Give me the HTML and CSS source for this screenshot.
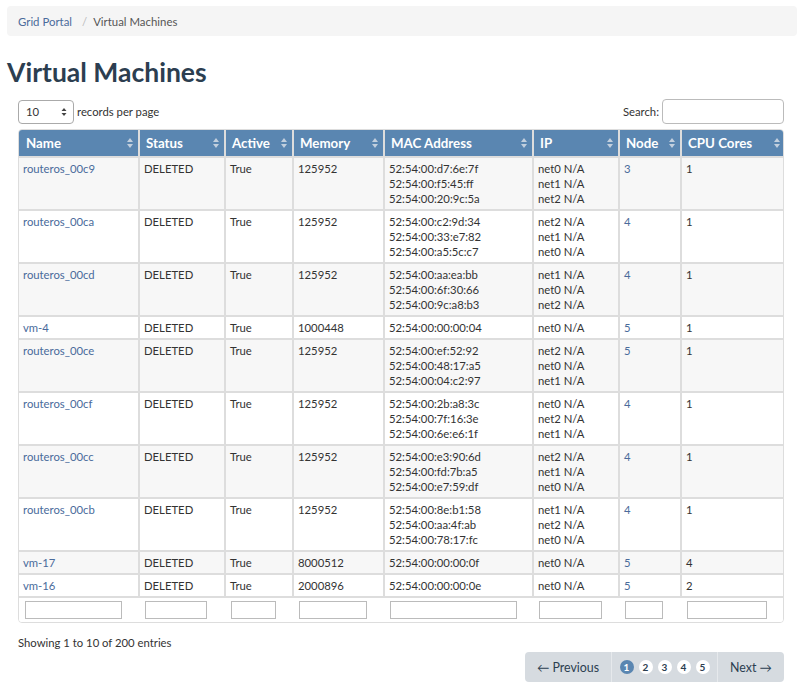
FILE: index.html
```html
<!DOCTYPE html>
<html>
<head>
<meta charset="utf-8">
<link rel="stylesheet" href="styles.css">
</head>
<body>
<div class="page">
  <ol class="crumbs">
    <li><a href="#">Grid Portal</a></li>
    <li class="sep">/</li>
    <li class="cur">Virtual Machines</li>
  </ol>
  <h1 class="title">Virtual Machines</h1>
  <div class="dt">
    <div class="tools">
      <label class="len"><span class="sel">10<svg width="6" height="10" viewBox="0 0 6 10"><path d="M3 1 L5.5 4 H0.5Z M3 9 L5.5 6 H0.5Z" fill="#444"/></svg></span> records per page</label>
      <label class="search">Search: <input type="text"></label>
    </div>
    <div class="tablewrap">
    <table class="grid">
      <colgroup>
        <col style="width:120px"><col style="width:86px"><col style="width:68px"><col style="width:91px"><col style="width:149px"><col style="width:86px"><col style="width:62px"><col style="width:104px">
      </colgroup>
      <thead>
        <tr>
          <th>Name<i class="sort"></i></th>
          <th>Status<i class="sort"></i></th>
          <th>Active<i class="sort"></i></th>
          <th>Memory<i class="sort"></i></th>
          <th>MAC Address<i class="sort"></i></th>
          <th>IP<i class="sort"></i></th>
          <th>Node<i class="sort"></i></th>
          <th>CPU Cores<i class="sort"></i></th>
        </tr>
      </thead>
      <tbody>
        <tr><td><a href="#">routeros_00c9</a></td><td>DELETED</td><td>True</td><td>125952</td><td>52:54:00:d7:6e:7f<br>52:54:00:f5:45:ff<br>52:54:00:20:9c:5a</td><td>net0 N/A<br>net1 N/A<br>net2 N/A</td><td><a href="#">3</a></td><td>1</td></tr>
        <tr><td><a href="#">routeros_00ca</a></td><td>DELETED</td><td>True</td><td>125952</td><td>52:54:00:c2:9d:34<br>52:54:00:33:e7:82<br>52:54:00:a5:5c:c7</td><td>net2 N/A<br>net1 N/A<br>net0 N/A</td><td><a href="#">4</a></td><td>1</td></tr>
        <tr><td><a href="#">routeros_00cd</a></td><td>DELETED</td><td>True</td><td>125952</td><td>52:54:00:aa:ea:bb<br>52:54:00:6f:30:66<br>52:54:00:9c:a8:b3</td><td>net1 N/A<br>net0 N/A<br>net2 N/A</td><td><a href="#">4</a></td><td>1</td></tr>
        <tr><td><a href="#">vm-4</a></td><td>DELETED</td><td>True</td><td>1000448</td><td>52:54:00:00:00:04</td><td>net0 N/A</td><td><a href="#">5</a></td><td>1</td></tr>
        <tr><td><a href="#">routeros_00ce</a></td><td>DELETED</td><td>True</td><td>125952</td><td>52:54:00:ef:52:92<br>52:54:00:48:17:a5<br>52:54:00:04:c2:97</td><td>net2 N/A<br>net0 N/A<br>net1 N/A</td><td><a href="#">5</a></td><td>1</td></tr>
        <tr><td><a href="#">routeros_00cf</a></td><td>DELETED</td><td>True</td><td>125952</td><td>52:54:00:2b:a8:3c<br>52:54:00:7f:16:3e<br>52:54:00:6e:e6:1f</td><td>net0 N/A<br>net2 N/A<br>net1 N/A</td><td><a href="#">4</a></td><td>1</td></tr>
        <tr><td><a href="#">routeros_00cc</a></td><td>DELETED</td><td>True</td><td>125952</td><td>52:54:00:e3:90:6d<br>52:54:00:fd:7b:a5<br>52:54:00:e7:59:df</td><td>net2 N/A<br>net1 N/A<br>net0 N/A</td><td><a href="#">4</a></td><td>1</td></tr>
        <tr><td><a href="#">routeros_00cb</a></td><td>DELETED</td><td>True</td><td>125952</td><td>52:54:00:8e:b1:58<br>52:54:00:aa:4f:ab<br>52:54:00:78:17:fc</td><td>net1 N/A<br>net2 N/A<br>net0 N/A</td><td><a href="#">4</a></td><td>1</td></tr>
        <tr><td><a href="#">vm-17</a></td><td>DELETED</td><td>True</td><td>8000512</td><td>52:54:00:00:00:0f</td><td>net0 N/A</td><td><a href="#">5</a></td><td>4</td></tr>
        <tr><td><a href="#">vm-16</a></td><td>DELETED</td><td>True</td><td>2000896</td><td>52:54:00:00:00:0e</td><td>net0 N/A</td><td><a href="#">5</a></td><td>2</td></tr>
      </tbody>
      <tfoot>
        <tr>
          <td><input class="f f1" type="text"></td>
          <td><input class="f f2" type="text"></td>
          <td><input class="f f3" type="text"></td>
          <td><input class="f f4" type="text"></td>
          <td><input class="f f5" type="text"></td>
          <td><input class="f f6" type="text"></td>
          <td><input class="f f7" type="text"></td>
          <td><input class="f f8" type="text"></td>
        </tr>
      </tfoot>
    </table>
    </div>
    <div class="info">Showing 1 to 10 of 200 entries</div>
    <div class="pagerrow">
      <div class="pager">
        <span class="prev">&larr; Previous</span>
        <span class="nums"><b class="n on">1</b><b class="n">2</b><b class="n">3</b><b class="n">4</b><b class="n">5</b></span>
        <span class="next">Next &rarr;</span>
      </div>
    </div>
  </div>
</div>
</body>
</html>
```

FILE: styles.css
```css
* { box-sizing: border-box; }
body {
  margin: 0;
  font-family: Lato, "Open Sans", sans-serif;
  font-size: 11.3px;
  color: #333;
  background: #fff;
}
a { color: #4a6b9b; text-decoration: none; }
.page { padding: 6px 6px 0 7px; }
.crumbs {
  list-style: none;
  margin: 0;
  padding: 0 11px;
  height: 30px;
  display: flex;
  align-items: center;
  background: #f5f5f5;
  border-radius: 4px;
  font-size: 11.4px;
  color: #555;
}
.crumbs .sep { color: #bbb; padding: 0 6px 0 10px; }
.title {
  margin: 21px 0 11px;
  font-size: 26.5px;
  font-weight: 700;
  line-height: 30px;
  color: #2c3e50;
}
.dt { margin: 0 13px 0 11px; }
.tools {
  display: flex;
  justify-content: space-between;
  align-items: center;
  height: 27px;
  margin-bottom: 4px;
}
.len { display: flex; align-items: center; gap: 3px; }
.sel {
  display: flex;
  align-items: center;
  justify-content: space-between;
  width: 56px;
  height: 24px;
  padding: 0 6px 0 7px;
  border: 1px solid #aaa;
  border-radius: 4px;
  background: #fff;
  color: #333;
}
.search { display: flex; align-items: center; gap: 3px; }
.search input {
  width: 122px;
  height: 25px;
  border: 1px solid #bbb;
  border-radius: 4px;
  margin: 0;
}
.tablewrap {
  border: 1px solid #ddd;
  border-radius: 4px;
  overflow: hidden;
}
.grid {
  width: 100%;
  table-layout: fixed;
  border-collapse: collapse;
}
.grid th {
  background: #5a86b1;
  color: #fff;
  font-size: 13.3px;
  font-weight: 700;
  text-align: left;
  height: 27px;
  padding: 0 6px;
  position: relative;
  border: 2px solid #ddd;
  border-top: 0;
}
.grid th:first-child { padding-left: 7px; }
.grid th:first-child, .grid td:first-child { border-left: 0; }
.grid th:last-child, .grid td:last-child { border-right: 0; }
.sort {
  position: absolute;
  right: 5px;
  top: 8px;
  width: 6px;
  height: 10px;
}
.sort::before, .sort::after {
  content: "";
  position: absolute;
  left: 0;
  border-left: 3px solid transparent;
  border-right: 3px solid transparent;
}
.sort::before { top: 0; border-bottom: 4px solid #c3d0de; }
.sort::after { bottom: 0; border-top: 4px solid #c3d0de; }
.grid td {
  vertical-align: top;
  line-height: 15px;
  padding: 3px 4px 3px 4px;
  border: 2px solid #ddd;
}
.grid tbody tr:nth-child(odd) td { background: #f7f7f7; }
.grid tfoot td {
  border: 0;
  border-top: 2px solid #ddd;
  padding: 3px 0 3px 6px;
  background: #fff;
}
.f {
  display: block;
  height: 18px;
  border: 1px solid #bbb;
  margin: 0;
  padding: 0;
}
.f1 { width: 97px; }
.f2 { width: 62px; }
.f3 { width: 45px; }
.f4 { width: 68px; }
.f5 { width: 127px; }
.f6 { width: 63px; }
.f7 { width: 38px; }
.f8 { width: 80px; }
.info { margin-top: 12px; height: 16px; line-height: 16px; }
.pagerrow { display: flex; justify-content: flex-end; margin-top: 1px; }
.pager {
  display: flex;
  height: 30px;
  background: #d6dbe0;
  border-radius: 4px;
  font-size: 12.4px;
  color: #2c3e50;
}
.pager > span { display: flex; align-items: center; }
.prev { width: 87px; justify-content: center; border-right: 1px solid #e6e9ec; }
.nums { width: 106px; justify-content: center; gap: 5px; border-right: 1px solid #e6e9ec; }
.next { width: 66px; justify-content: center; }
.n {
  width: 14px;
  height: 14px;
  border-radius: 50%;
  background: #fff;
  font-size: 10px;
  font-weight: 700;
  display: flex;
  align-items: center;
  justify-content: center;
  color: #2c3e50;
}
.n.on { background: #5a86b1; color: #fff; }
```
